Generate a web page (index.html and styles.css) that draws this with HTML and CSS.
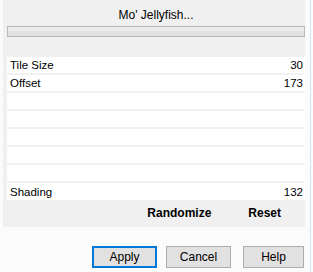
FILE: index.html
```html
<!DOCTYPE html>
<html>
<head>
    <meta charset="utf-8" />
    <title>Mo' Jellyfish</title>
    <link rel="stylesheet" href="styles.css">
</head>
<body>
    <section id="dialog">
        <section id="panel">
            <div class="title">Mo' Jellyfish...</div>
            <div class="bar"></div>
            <div class="params">
                <div class="row"><span>Tile Size</span><span>30</span></div>
                <div class="row"><span>Offset</span><span>173</span></div>
                <div class="row"></div>
                <div class="row"></div>
                <div class="row"></div>
                <div class="row"></div>
                <div class="row"></div>
                <div class="row last"><span>Shading</span><span>132</span></div>
            </div>
            <div class="tools">
                <span class="tool randomize">Randomize</span>
                <span class="tool">Reset</span>
            </div>
        </section>
        <section id="buttons">
            <input type="button" value="Apply" class="btn default" />
            <input type="button" value="Cancel" class="btn" />
            <input type="button" value="Help" class="btn help" />
        </section>
    </section>
</body>
</html>
```

FILE: styles.css
```css
*{
    padding:0;
    margin:0;
    box-sizing:border-box;
}
body{
    background:#fbfbfb;
    font:11.5px "Liberation Sans", Arial, sans-serif;
    color:#000;
}
#dialog{
    width:313px;
    height:272px;
    position:relative;
}
#dialog::after{
    content:"";
    position:absolute;
    top:0;
    bottom:0;
    right:2px;
    width:1px;
    background:#d6e4f2;
}
#panel{
    margin-left:3px;
    width:302px;
    height:227px;
    background:#f0f0f0;
    padding:0 0 0 4px;
    display:flex;
    flex-direction:column;
}
.title{
    height:26px;
    line-height:30px;
    text-align:center;
    font-size:12px;
}
.bar{
    height:11px;
    border:1px solid #b9b9b9;
    background:linear-gradient(#ececec 0, #ececec 40%, #e2e2e2 40%);
}
.params{
    margin-top:20px;
    background:#fff;
    height:143px;
}
.row{
    height:18px;
    border-bottom:2px solid #f2f2f2;
    display:flex;
    justify-content:space-between;
    align-items:center;
    padding:0 2px 0 3px;
}
.row.last{
    border-bottom:none;
    height:17px;
}
.tools{
    display:flex;
    justify-content:flex-end;
    padding:6px 24px 0 0;
    font-weight:bold;
    font-size:12px;
    gap:37px;
}
#buttons{
    display:flex;
    padding:19px 0 0 92px;
}
.btn{
    width:66px;
    height:22px;
    font:12px "Liberation Sans", Arial, sans-serif;
    background:#e1e1e1;
    border:1px solid #adadad;
    margin-right:9px;
}
.btn.default{
    border:2px solid #0078d7;
}
.btn.help{
    margin-left:3px;
    width:62px;
}
```
